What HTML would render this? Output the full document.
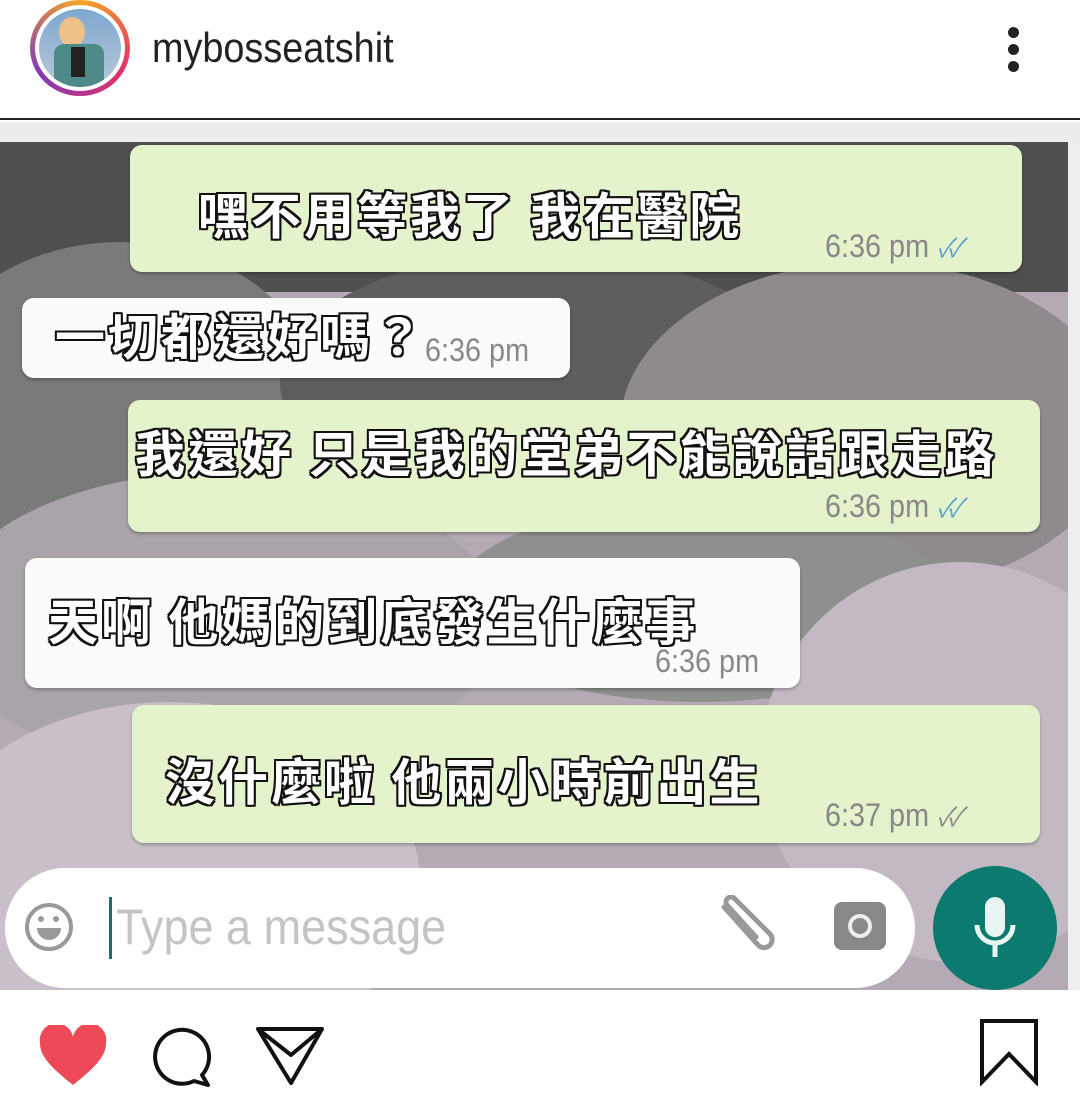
<!DOCTYPE html>
<html><head><meta charset="utf-8"><style>
body{margin:0;width:1080px;height:1106px;background:#fff;position:relative;overflow:hidden;font-family:"Liberation Sans","Noto Sans CJK TC",sans-serif}
.abs{position:absolute}
.b{position:absolute;border-radius:12px;box-shadow:0 2px 3px rgba(0,0,0,.25)}
.g{background:#e4f3cb}
.w{background:#fbfbfb}
.t{position:absolute;font-family:"Noto Sans CJK TC","WenQuanYi Zen Hei",sans-serif;font-weight:700;font-size:50px;color:#fff;white-space:nowrap;letter-spacing:3px;line-height:1;
text-shadow:-2px -2px 0 #111,2px -2px 0 #111,-2px 2px 0 #111,2px 2px 0 #111,0 2px 0 #111,0 -2px 0 #111,2px 0 0 #111,-2px 0 0 #111}
.tm{position:absolute;font-size:32px;color:#888;white-space:nowrap;transform:scaleX(.9);transform-origin:left}
.ck{color:#5aa0d0;font-size:26px;font-style:italic;letter-spacing:-6px}
</style></head><body>
<!-- header -->
<div class="abs" style="left:30px;top:0px;width:100px;height:96px;border-radius:50%;background:conic-gradient(#f5a623,#e1306c,#833ab4,#f5a623)"></div>
<div class="abs" style="left:35px;top:5px;width:90px;height:86px;border-radius:50%;background:#fff"></div>
<div class="abs" style="left:39px;top:9px;width:82px;height:78px;border-radius:50%;background:linear-gradient(#7fa8d0,#b8c8d8);overflow:hidden">
<div class="abs" style="left:20px;top:8px;width:26px;height:30px;border-radius:50%;background:#f0c28a"></div>
<div class="abs" style="left:15px;top:35px;width:50px;height:50px;background:#4d8a88;border-radius:10px"></div>
<div class="abs" style="left:32px;top:38px;width:14px;height:30px;background:#222"></div>
</div>
<div class="abs" style="left:152px;top:24px;font-size:42px;color:#222;transform:scaleX(.9);transform-origin:left">mybosseatshit</div>
<div class="abs" style="left:1008px;top:27px;width:11px;height:11px;border-radius:50%;background:#222"></div>
<div class="abs" style="left:1008px;top:44px;width:11px;height:11px;border-radius:50%;background:#222"></div>
<div class="abs" style="left:1008px;top:61px;width:11px;height:11px;border-radius:50%;background:#222"></div>
<div class="abs" style="left:0;top:118px;width:1080px;height:2px;background:#222"></div>
<div class="abs" style="left:0;top:122px;width:1080px;height:20px;background:#ececec"></div>
<!-- chat bg -->
<div class="abs" style="left:0;top:142px;width:1068px;height:848px;background:#b3aab4;overflow:hidden">
<div class="abs" style="left:-40px;top:0;width:1150px;height:150px;background:#4f4f4f"></div>
<div class="abs" style="left:-80px;top:100px;width:400px;height:320px;border-radius:50%;background:#7a7a7a"></div>
<div class="abs" style="left:280px;top:110px;width:520px;height:260px;border-radius:50%;background:#5e5e5e"></div>
<div class="abs" style="left:620px;top:120px;width:500px;height:330px;border-radius:50%;background:#8e8a8e"></div>
<div class="abs" style="left:-60px;top:330px;width:560px;height:300px;border-radius:50%;background:#a9a4a9"></div>
<div class="abs" style="left:450px;top:360px;width:500px;height:200px;border-radius:50%;background:#8f8f8f"></div>
<div class="abs" style="left:760px;top:420px;width:400px;height:400px;border-radius:50%;background:#c3b9c3"></div>
<div class="abs" style="left:-80px;top:560px;width:500px;height:360px;border-radius:50%;background:#c9c0c9"></div>
</div>
<div class="abs" style="left:1068px;top:142px;width:12px;height:848px;background:#eee"></div>
<!-- bubbles -->
<div class="b g" style="left:130px;top:145px;width:892px;height:127px"></div>
<div class="t" style="left:198px;top:188px">嘿不用等我了 我在醫院</div>
<div class="tm" style="left:825px;top:228px">6:36 pm <span class="ck">✓✓</span></div>

<div class="b w" style="left:22px;top:298px;width:548px;height:80px"></div>
<div class="t" style="left:55px;top:309px">一切都還好嗎？</div>
<div class="tm" style="left:425px;top:332px">6:36 pm</div>

<div class="b g" style="left:128px;top:400px;width:912px;height:132px"></div>
<div class="t" style="left:135px;top:426px">我還好 只是我的堂弟不能說話跟走路</div>
<div class="tm" style="left:825px;top:488px">6:36 pm <span class="ck">✓✓</span></div>

<div class="b w" style="left:25px;top:558px;width:775px;height:130px"></div>
<div class="t" style="left:48px;top:594px">天啊 他媽的到底發生什麼事</div>
<div class="tm" style="left:655px;top:643px">6:36 pm</div>

<div class="b g" style="left:132px;top:705px;width:908px;height:138px"></div>
<div class="t" style="left:165px;top:754px">沒什麼啦 他兩小時前出生</div>
<div class="tm" style="left:825px;top:797px">6:37 pm <span class="ck" style="color:#888">✓✓</span></div>

<!-- input -->
<div class="abs" style="left:5px;top:868px;width:910px;height:120px;border-radius:60px;background:#fff"></div>
<div class="abs" style="left:25px;top:903px;width:48px;height:48px;border-radius:50%;border:4px solid #999;box-sizing:border-box"></div>
<div class="abs" style="left:38px;top:916px;width:6px;height:6px;border-radius:50%;background:#999"></div>
<div class="abs" style="left:53px;top:916px;width:6px;height:6px;border-radius:50%;background:#999"></div>
<div class="abs" style="left:37px;top:928px;width:24px;height:12px;border-radius:0 0 12px 12px;background:#999"></div>
<div class="abs" style="left:109px;top:897px;width:3px;height:62px;background:#1a6e6a"></div>
<div class="abs" style="left:116px;top:898px;font-size:50px;color:#c4c4c4;transform:scaleX(.9);transform-origin:left">Type a message</div>
<svg class="abs" style="left:710px;top:895px" width="65" height="60" viewBox="0 0 65 60"><path d="M14 12 L48 50 a8 8 0 0 0 12-11 L24 3 a5 5 0 0 0-7 7 L46 42" fill="none" stroke="#999" stroke-width="5" stroke-linecap="round"/></svg>
<div class="abs" style="left:834px;top:902px;width:52px;height:48px;border-radius:8px;background:#888"></div>
<div class="abs" style="left:848px;top:914px;width:24px;height:24px;border-radius:50%;border:4px solid #eee;box-sizing:border-box"></div>
<div class="abs" style="left:933px;top:866px;width:124px;height:124px;border-radius:50%;background:#0d7a6f"></div>
<div class="abs" style="left:985px;top:897px;width:20px;height:40px;border-radius:10px;background:#e8f5f3"></div>
<svg class="abs" style="left:970px;top:915px" width="50" height="45" viewBox="0 0 50 45"><path d="M7 10 a18 18 0 0 0 36 0 M25 28 v14" fill="none" stroke="#e8f5f3" stroke-width="5"/></svg>
<!-- bottom icons -->
<svg class="abs" style="left:38px;top:1025px" width="70" height="62" viewBox="0 0 70 62"><path d="M35 60 C10 40 2 30 2 18 A16 16 0 0 1 35 12 A16 16 0 0 1 68 18 C68 30 60 40 35 60Z" fill="#ed4956"/></svg>
<svg class="abs" style="left:150px;top:1025px" width="66" height="66" viewBox="0 0 66 66"><path d="M52 50 A27 27 0 1 0 44 56 L58 60 Z" fill="none" stroke="#111" stroke-width="4" stroke-linejoin="round"/></svg>
<svg class="abs" style="left:255px;top:1025px" width="70" height="60" viewBox="0 0 70 60"><path d="M3 4 L67 4 L36 58 Z M3 4 L36 30 L67 4" fill="none" stroke="#111" stroke-width="4" stroke-linejoin="round"/></svg>
<svg class="abs" style="left:978px;top:1018px" width="62" height="68" viewBox="0 0 62 68"><path d="M4 3 H58 V64 L31 36 L4 64 Z" fill="none" stroke="#111" stroke-width="4" stroke-linejoin="miter"/></svg>
</body></html>
